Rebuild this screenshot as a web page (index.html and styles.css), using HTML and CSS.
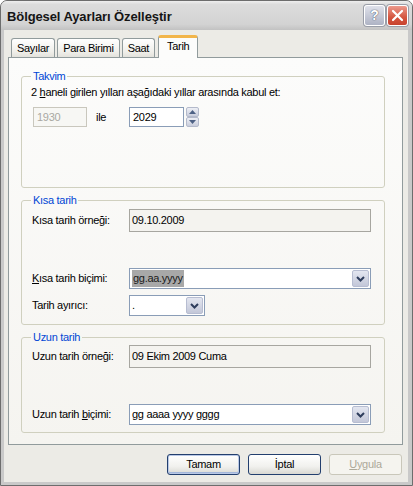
FILE: index.html
```html
<!DOCTYPE html>
<html lang="tr">
<head>
    <meta charset="UTF-8">
    <title>Bölgesel Ayarları Özelleştir</title>
    <link rel="stylesheet" href="styles.css">
</head>
<body>
    <div class="window">
        <div class="titlebar">
            <span class="title">Bölgesel Ayarları Özelleştir</span>
            <div class="caption-btns">
                <span class="cap-btn cap-help">?</span>
                <span class="cap-btn cap-close">
                    <svg width="13" height="13" viewBox="0 0 13 13"><path d="M2 2 L11 11 M11 2 L2 11" stroke="#fff" stroke-width="2.2" stroke-linecap="round"/></svg>
                </span>
            </div>
        </div>
        <div class="client">
            <!-- sekmeler -->
            <div class="tabs">
                <span class="tab">Sayılar</span>
                <span class="tab">Para Birimi</span>
                <span class="tab">Saat</span>
                <span class="tab active">Tarih</span>
            </div>
            <div class="panel">
                <fieldset class="group group-calendar">
                    <legend>Takvim</legend>
                    <p class="hint">2 <u>h</u>aneli girilen yılları aşağıdaki yıllar arasında kabul et:</p>
                    <div class="year-row">
                        <span class="field year-from off">1930</span>
                        <span class="year-sep">ile</span>
                        <span class="field year-to">2029</span>
                        <span class="spin">
                            <span class="spin-btn"><svg width="7" height="4" viewBox="0 0 7 4"><path d="M0 4 L3.5 0 L7 4Z" fill="#4d6185"/></svg></span>
                            <span class="spin-btn"><svg width="7" height="4" viewBox="0 0 7 4"><path d="M0 0 L3.5 4 L7 0Z" fill="#4d6185"/></svg></span>
                        </span>
                    </div>
                </fieldset>

                <fieldset class="group group-short">
                    <legend>Kısa tarih</legend>
                    <div class="row">
                        <span class="label">Kısa tarih örneği:</span>
                        <span class="sample">09.10.2009</span>
                    </div>
                    <div class="row row-gap">
                        <span class="label"><u>K</u>ısa tarih biçimi:</span>
                        <span class="combo">
                            <span class="combo-text"><span class="sel">gg.aa.yyyy</span></span>
                            <span class="drop"><svg width="9" height="6" viewBox="0 0 9 6"><path d="M1 1 L4.5 4.5 L8 1" fill="none" stroke="#2e3d5c" stroke-width="2"/></svg></span>
                        </span>
                    </div>
                    <div class="row row-next">
                        <span class="label">Tarih ayırıcı:</span>
                        <span class="combo combo-small">
                            <span class="combo-text">.</span>
                            <span class="drop"><svg width="9" height="6" viewBox="0 0 9 6"><path d="M1 1 L4.5 4.5 L8 1" fill="none" stroke="#2e3d5c" stroke-width="2"/></svg></span>
                        </span>
                    </div>
                </fieldset>

                <fieldset class="group group-long">
                    <legend>Uzun tarih</legend>
                    <div class="row">
                        <span class="label">Uzun tarih örneği:</span>
                        <span class="sample">09 Ekim 2009 Cuma</span>
                    </div>
                    <div class="row row-gap">
                        <span class="label">Uzun tarih <u>b</u>içimi:</span>
                        <span class="combo">
                            <span class="combo-text">gg aaaa yyyy gggg</span>
                            <span class="drop"><svg width="9" height="6" viewBox="0 0 9 6"><path d="M1 1 L4.5 4.5 L8 1" fill="none" stroke="#2e3d5c" stroke-width="2"/></svg></span>
                        </span>
                    </div>
                </fieldset>
            </div>
            <div class="actions">
                <span class="btn btn-default">Tamam</span>
                <span class="btn">İptal</span>
                <span class="btn off"><u>U</u>ygula</span>
            </div>
        </div>
    </div>
</body>
</html>
```

FILE: styles.css
```css
* {
    margin: 0;
    padding: 0;
    box-sizing: border-box;
}

body {
    width: 413px;
    height: 486px;
    overflow: hidden;
    background: #fff;
    font-family: "Liberation Sans", Arial, sans-serif;
    font-size: 11px;
    line-height: 13px;
    letter-spacing: -0.3px;
    color: #000;
}

u {
    text-decoration: underline;
    text-underline-offset: 1px;
}

/* pencere */
.window {
    width: 413px;
    height: 486px;
    display: flex;
    flex-direction: column;
    background: #c9c9c9;
    border: 1px solid #6d6d6d;
    border-radius: 7px 7px 0 0;
    overflow: hidden;
}

.titlebar {
    height: 29px;
    flex: none;
    display: flex;
    align-items: center;
    justify-content: space-between;
    padding: 0 4px 0 6px;
    background: linear-gradient(#efefef 0, #dcdcdc 12%, #d3d3d3 80%, #c2c2c2 100%);
}

.title {
    font-size: 13px;
    font-weight: bold;
    letter-spacing: -0.1px;
    color: #151515;
    padding-top: 1px;
}

.caption-btns {
    display: flex;
    gap: 2px;
}

.cap-btn {
    width: 21px;
    height: 21px;
    display: flex;
    align-items: center;
    justify-content: center;
    border: 1px solid #fff;
    border-radius: 3px;
    box-shadow: 0 0 0 1px #9a9ea8;
}

.cap-help {
    background: linear-gradient(#dfe1ea, #aeb3c4);
    color: #fff;
    font-size: 14px;
    font-weight: bold;
    letter-spacing: 0;
    text-shadow: 0 0 1px #4d5264, 0 0 1px #4d5264;
}

.cap-close {
    background: linear-gradient(#ec9a8d, #d4553f 60%, #c8432f);
}

.client {
    flex: 1;
    margin: 0 4px 3px 3px;
    padding: 5px 5px 0 4px;
    background: #ecebe6;
}

/* sekmeler */
.tabs {
    height: 22px;
    display: flex;
    align-items: flex-end;
    gap: 2px;
    padding-left: 3px;
}

.tab {
    height: 19px;
    padding: 3px 5px 0;
    border: 1px solid #919b9c;
    border-bottom: 0;
    border-radius: 3px 3px 0 0;
    background: linear-gradient(#fff, #f0efea 70%, #e3e2dc);
}

.tab.active {
    height: 23px;
    margin: 0 0 -1px 1px;
    padding: 2px 8px 0;
    position: relative;
    z-index: 1;
    background: #fcfcfb;
    border-top: 3px solid #f2b54a;
}

.panel {
    height: 388px;
    padding: 12px 17px 0 12px;
    border: 1px solid #919b9c;
    background: linear-gradient(#fcfcfb, #f5f4f0);
}

/* gruplar */
.group {
    border: 1px solid #d0d0bf;
    border-radius: 3px;
    padding: 0 12px 0 10px;
    margin-bottom: 6px;
}

.group legend {
    line-height: 13px;
    padding: 0 2px;
    margin-left: -1px;
    color: #0046d5;
}

.group-calendar {
    padding-top: 3px;
    padding-bottom: 60px;
}

.group-calendar .hint {
    margin-left: -1px;
}

.group-short {
    padding-top: 2px;
    padding-bottom: 8px;
}

.group-long {
    padding-top: 1px;
    padding-bottom: 7px;
}

.year-row {
    display: flex;
    align-items: center;
    margin-top: 8px;
}

.field {
    height: 20px;
    display: flex;
    align-items: center;
    padding-left: 3px;
    background: #fff;
    border: 1px solid #8a9db7;
}

.field.off {
    color: #a9a8a2;
    border-color: #c9c7bd;
    background: #f7f7f4;
}

.year-from {
    width: 54px;
    margin-left: 1px;
}

.year-sep {
    width: 42px;
    padding-left: 9px;
}

.year-to {
    width: 55px;
}

.spin {
    width: 13px;
    height: 20px;
    margin-left: 2px;
    display: flex;
    flex-direction: column;
}

.spin-btn {
    flex: 1;
    display: flex;
    align-items: center;
    justify-content: center;
    border: 1px solid #b4bacb;
    border-radius: 2px;
    background: linear-gradient(#eef0f6, #c9cddc);
}

.row {
    display: flex;
    align-items: center;
}

.row-gap {
    margin-top: 36px;
}

.row-next {
    margin-top: 6px;
}

.label {
    width: 97px;
    flex: none;
}

.sample {
    width: 242px;
    height: 23px;
    display: flex;
    align-items: center;
    padding-left: 2px;
    border: 1px solid #a7a6a0;
    background: #f4f3ef;
}

.combo {
    width: 242px;
    height: 21px;
    display: flex;
    align-items: stretch;
    padding: 1px;
    border: 1px solid #8a9db7;
    background: #fff;
}

.combo-small {
    width: 76px;
}

.combo-text {
    flex: 1;
    display: flex;
    align-items: center;
    padding-left: 1px;
}

.sel {
    background: #a8a8a8;
    color: #1a1a1a;
    padding: 2px 1px;
}

.drop {
    width: 17px;
    display: flex;
    align-items: center;
    justify-content: center;
    border: 1px solid #b7bdd1;
    border-radius: 2px;
    background: linear-gradient(#e3e6f0, #c3c7d8);
}

/* butonlar */
.actions {
    display: flex;
    justify-content: flex-end;
    gap: 8px;
    margin-top: 9px;
    padding-right: 1px;
}

.btn {
    width: 73px;
    height: 21px;
    display: flex;
    align-items: center;
    justify-content: center;
    border: 1px solid #233f6e;
    border-radius: 3px;
    background: linear-gradient(#fff, #f1f1ee 60%, #d9d8d2);
}

.btn-default {
    box-shadow: inset 0 0 0 1px #b9c8e6, inset 0 -1px 0 1px #a3b6da;
}

.btn.off {
    color: #aca899;
    border-color: #c9c7ba;
    background: #f5f4ef;
}
```
